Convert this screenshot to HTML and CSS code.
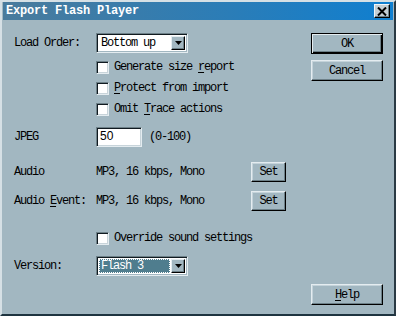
FILE: index.html
```html
<!DOCTYPE html>
<html>
<head>
<meta charset="utf-8">
<link rel="stylesheet" href="styles.css">
</head>
<body>
<div class="window">
  <div class="titlebar">
    <span class="title">Export Flash Player</span>
    <span class="close"><svg width="10" height="9" viewBox="0 0 10 9"><path d="M1 0.5 L9 8.5 M9 0.5 L1 8.5" stroke="#000" stroke-width="2"/></svg></span>
  </div>
  <div class="body">
    <div class="form">
      <div class="row r1">
        <span class="label">Load Order:</span>
        <span class="select"><span class="sel-text">Bottom up</span><span class="arrow"><svg width="7" height="4" viewBox="0 0 7 4"><path d="M0 0 H7 L3.5 4 Z" fill="#000"/></svg></span></span>
      </div>
      <div class="row r2 chk-row">
        <span></span>
        <span class="check"><span class="box"></span><span class="txt">Generate size <u>r</u>eport</span></span>
      </div>
      <div class="row r3 chk-row">
        <span></span>
        <span class="check"><span class="box"></span><span class="txt"><u>P</u>rotect from import</span></span>
      </div>
      <div class="row r3 chk-row">
        <span></span>
        <span class="check"><span class="box"></span><span class="txt">Omit <u>T</u>race actions</span></span>
      </div>
      <div class="row r5">
        <span class="label">JPEG</span>
        <span class="jpeg"><span class="input">50</span><span class="range">(0-100)</span></span>
      </div>
      <div class="row r6">
        <span class="label">Audio</span>
        <span class="value">MP3, 16 kbps, Mono</span>
        <span class="btn small">Set</span>
      </div>
      <div class="row r7">
        <span class="label">Audio <u>E</u>vent:</span>
        <span class="value">MP3, 16 kbps, Mono</span>
        <span class="btn small">Set</span>
      </div>
      <div class="row r8 chk-row">
        <span></span>
        <span class="check"><span class="box"></span><span class="txt">Override sound settings</span></span>
      </div>
      <div class="row r9">
        <span class="label">Version:</span>
        <span class="select"><span class="sel-text selected">Flash 3</span><span class="arrow"><svg width="7" height="4" viewBox="0 0 7 4"><path d="M0 0 H7 L3.5 4 Z" fill="#000"/></svg></span></span>
      </div>
    </div>
    <div class="side">
      <span class="btn big default">OK</span>
      <span class="btn big cancel">Cancel</span>
      <span class="btn big help"><span><u>H</u>elp</span></span>
    </div>
  </div>
</div>
</body>
</html>
```

FILE: styles.css
```css
html, body {
  margin: 0;
  padding: 0;
  background: #a2b7c1;
}
.window {
  width: 396px;
  height: 316px;
  box-sizing: border-box;
  background: #a2b7c1;
  border-left: 2px solid #d6e0e5;
  border-top: 2px solid #d6e0e5;
  border-right: 2px solid #2a3a44;
  border-bottom: 2px solid #1e3440;
  display: flex;
  flex-direction: column;
  font-family: "Liberation Mono", "DejaVu Sans Mono", monospace;
  font-size: 12px;
  letter-spacing: -1.2px;
  color: #000;
}
.titlebar {
  height: 18px;
  margin-left: 1px;
  margin-right: 1px;
  background: linear-gradient(to right, #4a7b9c, #2a7db8 60%, #0f7fd0);
  display: flex;
  align-items: center;
  justify-content: space-between;
  padding-left: 3px;
  padding-right: 3px;
}
.title {
  color: #fff;
  font-weight: bold;
  font-size: 12px;
  letter-spacing: -0.2px;
}
.close {
  width: 16px;
  height: 14px;
  box-sizing: border-box;
  background: #c4ced3;
  border-top: 1px solid #f2f6f8;
  border-left: 1px solid #f2f6f8;
  border-right: 1px solid #000;
  border-bottom: 1px solid #000;
  box-shadow: inset -1px -1px 0 #6d8088;
  display: flex;
  align-items: center;
  justify-content: center;
}
.body {
  flex: 1;
  display: flex;
  padding: 13px 11px 9px 12px;
}
.form {
  width: 272px;
  display: flex;
  flex-direction: column;
}
.row {
  display: grid;
  grid-template-columns: 82px 155px 35px;
  align-items: center;
  height: 20px;
}
.chk-row .check {
  grid-column: 2 / 4;
}
.r2 { margin-top: 4px; }
.r3 { margin-top: 1px; }
.r5 { margin-top: 8px; }
.r6 { margin-top: 15px; }
.r7 { margin-top: 9px; }
.r8 { margin-top: 17px; }
.r9 { margin-top: 8px; }
.label {
  white-space: nowrap;
}
u {
  text-decoration: underline;
  text-underline-offset: 2px;
}
.select {
  width: 92px;
  height: 20px;
  box-sizing: border-box;
  background: #fff;
  border-top: 1px solid #6d8088;
  border-left: 1px solid #6d8088;
  border-right: 1px solid #e4ecf0;
  border-bottom: 1px solid #e4ecf0;
  box-shadow: inset 1px 1px 0 #101a20, inset -1px -1px 0 #a2b7c1;
  display: flex;
  align-items: center;
  padding: 2px;
}
.sel-text {
  flex: 1;
  height: 14px;
  line-height: 14px;
  padding-left: 2px;
  box-sizing: border-box;
}
.sel-text.selected {
  background: #4f7d8e;
  color: #fff;
  outline: 1px dotted #fff;
  outline-offset: -1px;
  margin-right: 1px;
}
.arrow {
  width: 14px;
  height: 14px;
  box-sizing: border-box;
  background: #a2b7c1;
  border-top: 1px solid #e4ecf0;
  border-left: 1px solid #e4ecf0;
  border-right: 1px solid #000;
  border-bottom: 1px solid #000;
  box-shadow: inset -1px -1px 0 #6d8088;
  display: flex;
  align-items: center;
  justify-content: center;
}
.check {
  display: flex;
  align-items: center;
  white-space: nowrap;
}
.box {
  width: 13px;
  height: 13px;
  box-sizing: border-box;
  background: #fff;
  border-top: 1px solid #6d8088;
  border-left: 1px solid #6d8088;
  border-right: 1px solid #e4ecf0;
  border-bottom: 1px solid #e4ecf0;
  box-shadow: inset 1px 1px 0 #101a20, inset -1px -1px 0 #c8d4da;
  margin-right: 5px;
  flex: none;
}
.txt {
  white-space: pre;
}
.jpeg {
  display: flex;
  align-items: center;
  grid-column: 2 / 4;
}
.input {
  width: 46px;
  height: 20px;
  box-sizing: border-box;
  background: #fff;
  border-top: 1px solid #6d8088;
  border-left: 1px solid #6d8088;
  border-right: 1px solid #e4ecf0;
  border-bottom: 1px solid #e4ecf0;
  box-shadow: inset 1px 1px 0 #101a20, inset -1px -1px 0 #c8d4da;
  font-family: "Liberation Sans", Arial, sans-serif;
  font-size: 12px;
  letter-spacing: 0;
  line-height: 17px;
  padding-left: 3px;
  margin-right: 7px;
}
.value {
  white-space: nowrap;
}
.btn {
  display: flex;
  align-items: center;
  justify-content: center;
  box-sizing: border-box;
  background: #a2b7c1;
  border-top: 1px solid #e4ecf0;
  border-left: 1px solid #e4ecf0;
  border-right: 1px solid #000;
  border-bottom: 1px solid #000;
  box-shadow: inset -1px -1px 0 #6d8088, inset 1px 1px 0 #c4d3da;
}
.small {
  width: 35px;
  height: 20px;
}
.side {
  margin-left: 25px;
  width: 72px;
  display: flex;
  flex-direction: column;
}
.big {
  width: 72px;
  height: 21px;
}
.default {
  border: 1px solid #000;
  box-shadow: inset 1px 1px 0 #e4ecf0, inset -1px -1px 0 #000, inset -2px -2px 0 #6d8088;
}
.cancel {
  margin-top: 6px;
}
.help {
  margin-top: auto;
}
```
